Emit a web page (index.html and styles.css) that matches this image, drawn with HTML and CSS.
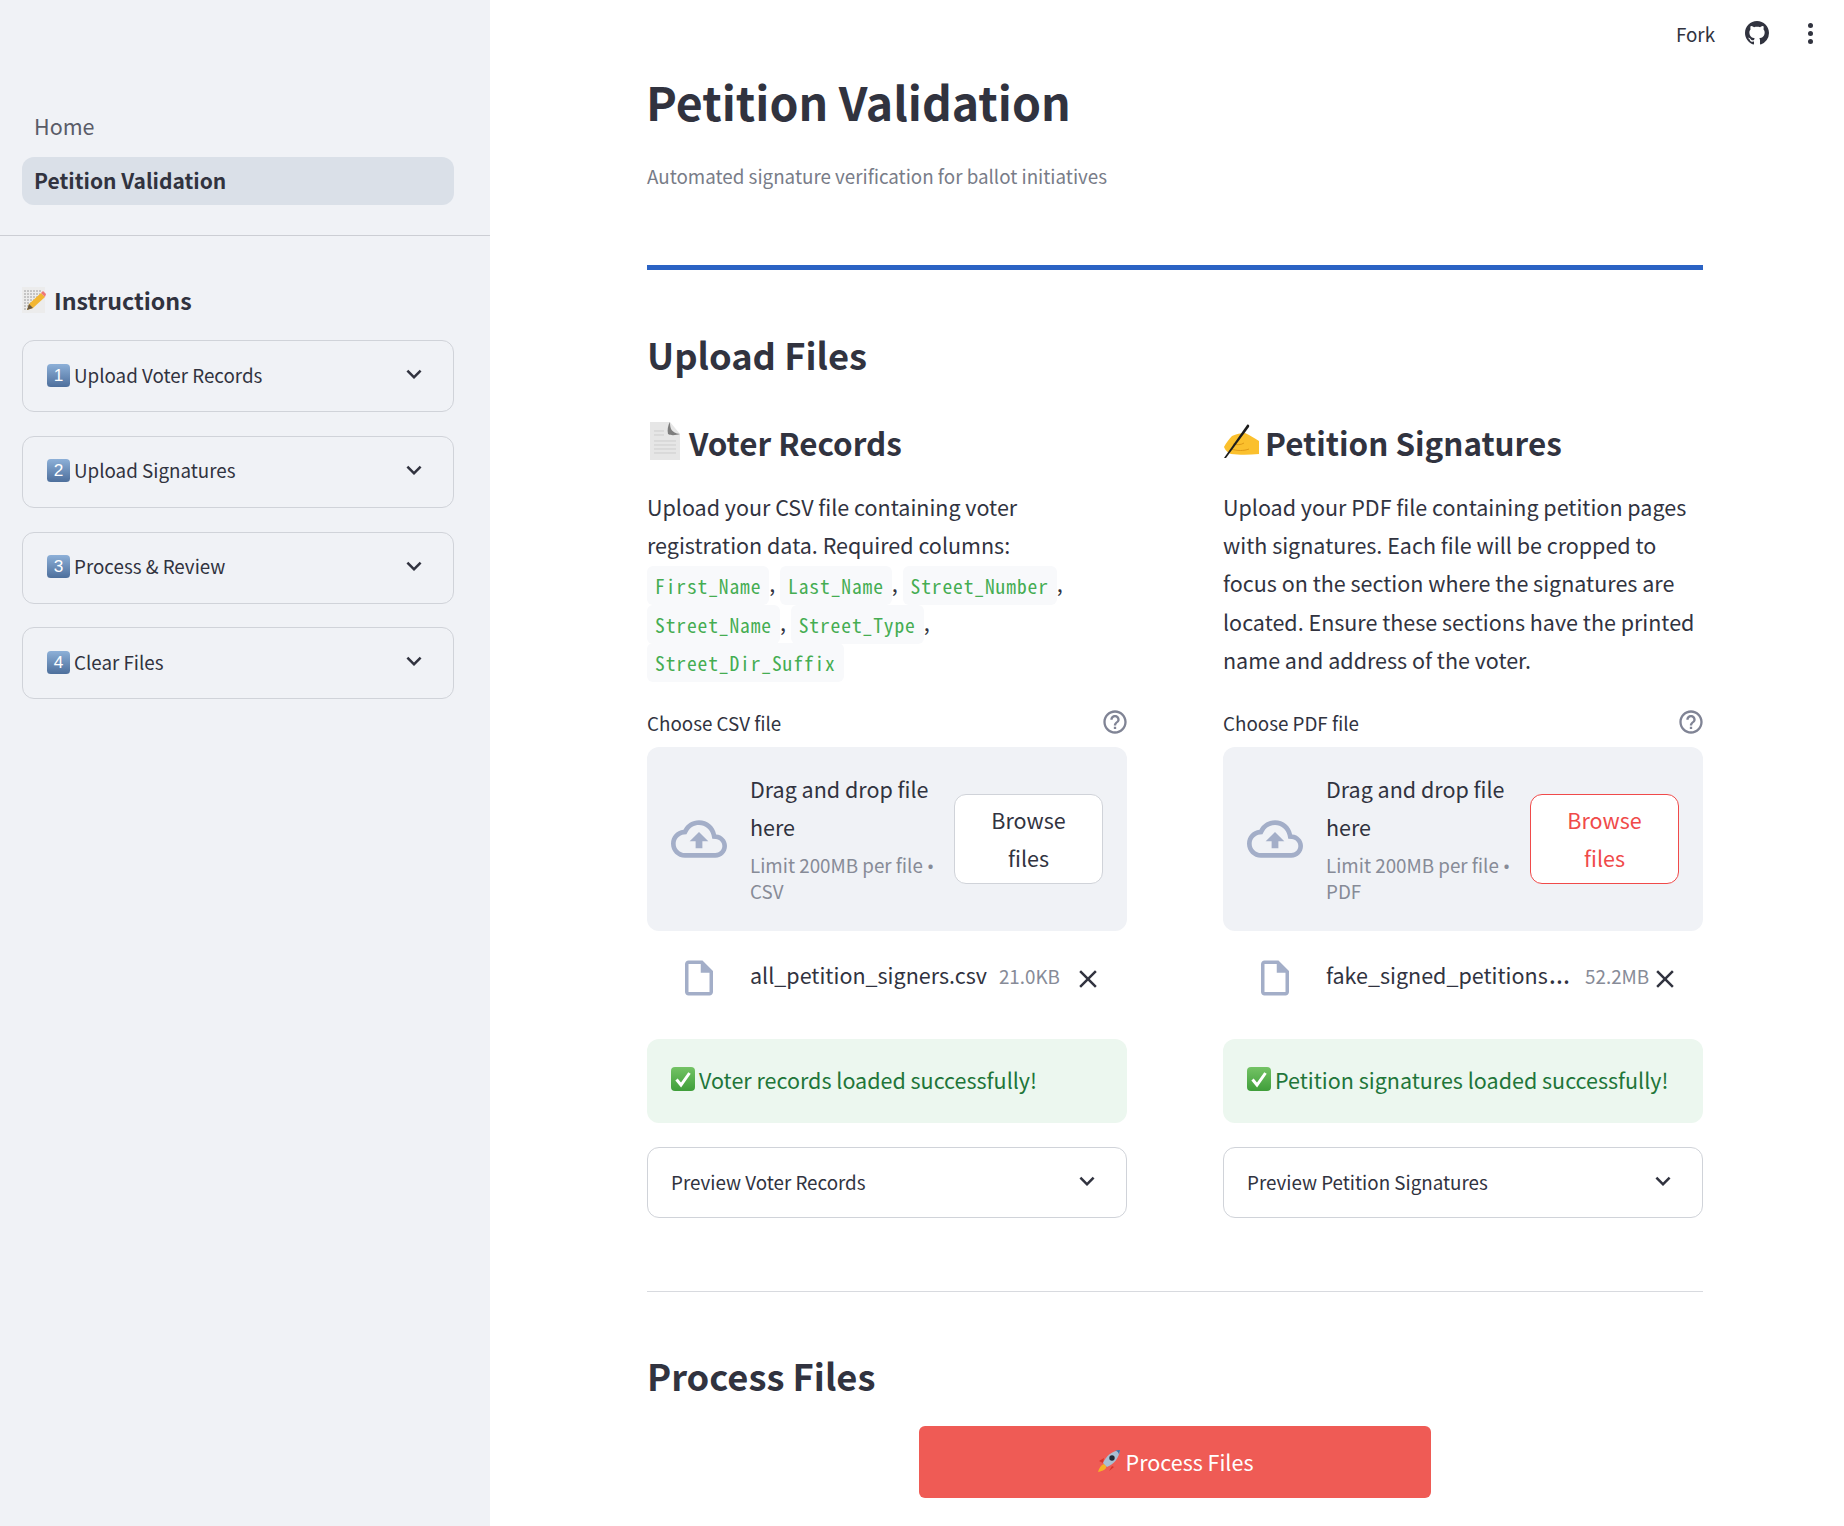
FILE: index.html
```html
<!DOCTYPE html>
<html lang="en">
<head>
<meta charset="utf-8">
<title>Petition Validation</title>
<link rel="stylesheet" href="styles.css">
</head>
<body>
<svg class="defs" aria-hidden="true"><defs><linearGradient id="keyg" x1="0" y1="0" x2="0" y2="1"><stop offset="0" stop-color="#8db0d8"/><stop offset="1" stop-color="#4d6f9c"/></linearGradient><linearGradient id="chkg" x1="0" y1="0" x2="0" y2="1"><stop offset="0" stop-color="#74c365"/><stop offset="1" stop-color="#3f9e3a"/></linearGradient></defs></svg>
<div class="app">
  <aside class="sidebar">
    <nav class="nav">
      <a class="nav-link">Home</a>
      <a class="nav-link active">Petition Validation</a>
    </nav>
    <div class="side-body">
      <h2 class="side-title"><svg class="emoji-memo" viewBox="0 0 24 26"><rect x="0" y="0" width="23" height="26" fill="#ececec"/><path d="M2 4h18M2 7h16M2 10h14M2 13h10M2 16h7M2 19h5M2 22h4" stroke="#8a8a8a" stroke-width=".8" stroke-dasharray="2 1"/><path d="M5 23l2-6L19 6l4 4-12 11z" fill="#f2b632"/><path d="M19 6l2-2 3 3-1 3z" fill="#e77"/><path d="M5 23l2-6 4 4z" fill="#6b5a44"/></svg>Instructions</h2>
      <div class="exp side-exp"><span class="exp-label"><svg class="key" viewBox="0 0 24 24"><rect width="24" height="24" rx="4" fill="url(#keyg)"/><text x="12" y="18" class="key-t">1</text></svg>Upload Voter Records</span><svg class="chev" viewBox="0 0 24 24"><path d="M7.41 8.59 12 13.17l4.59-4.58L18 10l-6 6-6-6z"/></svg></div>
      <div class="exp side-exp"><span class="exp-label"><svg class="key" viewBox="0 0 24 24"><rect width="24" height="24" rx="4" fill="url(#keyg)"/><text x="12" y="18" class="key-t">2</text></svg>Upload Signatures</span><svg class="chev" viewBox="0 0 24 24"><path d="M7.41 8.59 12 13.17l4.59-4.58L18 10l-6 6-6-6z"/></svg></div>
      <div class="exp side-exp"><span class="exp-label"><svg class="key" viewBox="0 0 24 24"><rect width="24" height="24" rx="4" fill="url(#keyg)"/><text x="12" y="18" class="key-t">3</text></svg>Process &amp; Review</span><svg class="chev" viewBox="0 0 24 24"><path d="M7.41 8.59 12 13.17l4.59-4.58L18 10l-6 6-6-6z"/></svg></div>
      <div class="exp side-exp"><span class="exp-label"><svg class="key" viewBox="0 0 24 24"><rect width="24" height="24" rx="4" fill="url(#keyg)"/><text x="12" y="18" class="key-t">4</text></svg>Clear Files</span><svg class="chev" viewBox="0 0 24 24"><path d="M7.41 8.59 12 13.17l4.59-4.58L18 10l-6 6-6-6z"/></svg></div>
    </div>
  </aside>
  <main class="main">
    <header class="toolbar">
      <span class="fork">Fork</span>
      <svg class="gh" viewBox="0 0 16 16"><path d="M8 0C3.58 0 0 3.58 0 8c0 3.54 2.29 6.53 5.47 7.59.4.07.55-.17.55-.38 0-.19-.01-.82-.01-1.49-2.01.37-2.53-.49-2.69-.94-.09-.23-.48-.94-.82-1.13-.28-.15-.68-.52-.01-.53.63-.01 1.08.58 1.23.82.72 1.21 1.87.87 2.33.66.07-.52.28-.87.51-1.07-1.78-.2-3.64-.89-3.64-3.95 0-.87.31-1.59.82-2.15-.08-.2-.36-1.02.08-2.12 0 0 .67-.21 2.2.82.64-.18 1.32-.27 2-.27s1.36.09 2 .27c1.53-1.04 2.2-.82 2.2-.82.44 1.1.16 1.92.08 2.12.51.56.82 1.27.82 2.15 0 3.07-1.87 3.75-3.65 3.95.29.25.54.73.54 1.48 0 1.07-.01 1.93-.01 2.2 0 .21.15.46.55.38A8.01 8.01 0 0 0 16 8c0-4.42-3.58-8-8-8z"/></svg>
      <span class="dots"><i></i><i></i><i></i></span>
    </header>
    <div class="content">
      <h1 class="title">Petition Validation</h1>
      <p class="subtitle">Automated signature verification for ballot initiatives</p>
      <div class="blue-rule"></div>
      <h2 class="section">Upload Files</h2>
      <div class="cols">
        <section class="col">
          <h3 class="col-title"><svg class="emoji-page" viewBox="0 0 36 40"><path d="M3 1h20l10 12v26H3z" fill="#e6e6e6"/><path d="M23 1c0 6 1 11 10 12-3 1-9 2-12 0-1-4 0-9 2-12z" fill="#7d7d7d"/><path d="M7 10h10M7 14h10M7 20h22M7 24h22M7 28h22M7 32h22" stroke="#cdcdcd" stroke-width="1"/></svg>Voter Records</h3>
          <p class="body-text">Upload your CSV file containing voter registration data. Required columns: <code>First_Name</code>, <code>Last_Name</code>, <code>Street_Number</code>, <code>Street_Name</code>, <code>Street_Type</code>, <code>Street_Dir_Suffix</code></p>
          <div class="label-row"><span>Choose CSV file</span><svg class="help" viewBox="0 0 24 24"><path d="M11 18h2v-2h-2zm1-16C6.48 2 2 6.48 2 12s4.480 10 10 10 10-4.480 10-10S17.520 2 12 2zm0 18c-4.410 0-8-3.590-8-8s3.590-8 8-8 8 3.590 8 8-3.590 8-8 8zm0-14c-2.210 0-4 1.790-4 4h2c0-1.100.9-2 2-2s2 .9 2 2c0 2-3 1.750-3 5h2c0-2.250 3-2.500 3-5 0-2.210-1.790-4-4-4z"/></svg></div>
          <div class="drop">
            <svg class="cloud" viewBox="0 0 24 24"><path d="M19.35 10.040C18.670 6.590 15.640 4 12 4 9.110 4 6.600 5.640 5.350 8.040 2.340 8.360 0 10.910 0 14c0 3.310 2.690 6 6 6h13c2.760 0 5-2.240 5-5 0-2.640-2.050-4.780-4.650-4.960zM19 18H6c-2.210 0-4-1.790-4-4 0-2.050 1.530-3.760 3.560-3.970l1.070-.11.5-.95C8.080 7.140 9.940 6 12 6c2.620 0 4.880 1.860 5.390 4.430l.3 1.500 1.530.11c1.560.1 2.780 1.410 2.780 2.960 0 1.650-1.350 3-3 3zM8 13h2.550v3h2.900v-3H16l-4-4z"/></svg>
            <div class="drop-text"><div class="drop-main">Drag and drop file here</div><div class="drop-sub">Limit 200MB per file <span class="latin">•</span> CSV</div></div>
            <button class="browse">Browse files</button>
          </div>
          <div class="file-row">
            <svg class="file-ic" viewBox="0 0 24 24"><path d="M14 2H6c-1.100 0-1.990.9-1.990 2L4 20c0 1.100.89 2 1.990 2H18c1.100 0 2-.9 2-2V8l-6-6zM6 20V4h7v5h5v11H6z"/></svg>
            <span class="file-name">all_petition_signers.csv</span><span class="file-size">21.0KB</span>
            <svg class="file-x" viewBox="0 0 24 24"><path d="M19 6.410 17.590 5 12 10.590 6.410 5 5 6.410 10.590 12 5 17.590 6.410 19 12 13.410 17.590 19 19 17.590 13.410 12z"/></svg>
          </div>
          <div class="success"><svg class="check" viewBox="0 0 24 24"><rect width="24" height="24" rx="4" fill="url(#chkg)"/><path d="M5.500 12.500l4.500 5.500 8.500-12" fill="none" stroke="#fff" stroke-width="3"/></svg>Voter records loaded successfully!</div>
          <div class="exp main-exp"><span class="exp-label">Preview Voter Records</span><svg class="chev" viewBox="0 0 24 24"><path d="M7.41 8.59 12 13.17l4.59-4.58L18 10l-6 6-6-6z"/></svg></div>
        </section>
        <section class="col">
          <h3 class="col-title"><svg class="emoji-write" viewBox="0 0 36 36"><path d="M9 13c4-2 9-3 13-3 5 2 9 5 14 8v13c-10 1-20 1-28 0-3-1-6-4-7-7 2-4 5-8 8-11z" fill="#fbc02d"/><path d="M8 26c6 2 13 2 18 0M10 21c4 1 8 1 11-1" stroke="#e09a16" stroke-width="1" fill="none"/><path d="M1 35L24 2c1-1 3 0 2 2L3 35z" fill="#1d1d1d"/></svg>Petition Signatures</h3>
          <p class="body-text">Upload your PDF file containing petition pages with signatures. Each file will be cropped to focus on the section where the signatures are located. Ensure these sections have the printed name and address of the voter.</p>
          <div class="label-row"><span>Choose PDF file</span><svg class="help" viewBox="0 0 24 24"><path d="M11 18h2v-2h-2zm1-16C6.48 2 2 6.48 2 12s4.480 10 10 10 10-4.480 10-10S17.520 2 12 2zm0 18c-4.410 0-8-3.590-8-8s3.590-8 8-8 8 3.590 8 8-3.590 8-8 8zm0-14c-2.210 0-4 1.790-4 4h2c0-1.100.9-2 2-2s2 .9 2 2c0 2-3 1.750-3 5h2c0-2.250 3-2.500 3-5 0-2.210-1.790-4-4-4z"/></svg></div>
          <div class="drop">
            <svg class="cloud" viewBox="0 0 24 24"><path d="M19.35 10.040C18.670 6.590 15.640 4 12 4 9.110 4 6.600 5.640 5.350 8.040 2.340 8.360 0 10.910 0 14c0 3.310 2.690 6 6 6h13c2.760 0 5-2.240 5-5 0-2.640-2.050-4.780-4.650-4.960zM19 18H6c-2.210 0-4-1.790-4-4 0-2.050 1.530-3.760 3.560-3.970l1.070-.11.5-.95C8.080 7.140 9.940 6 12 6c2.620 0 4.880 1.860 5.390 4.430l.3 1.500 1.530.11c1.560.1 2.780 1.410 2.780 2.960 0 1.650-1.350 3-3 3zM8 13h2.550v3h2.900v-3H16l-4-4z"/></svg>
            <div class="drop-text"><div class="drop-main">Drag and drop file here</div><div class="drop-sub">Limit 200MB per file <span class="latin">•</span> PDF</div></div>
            <button class="browse hot">Browse files</button>
          </div>
          <div class="file-row">
            <svg class="file-ic" viewBox="0 0 24 24"><path d="M14 2H6c-1.100 0-1.990.9-1.990 2L4 20c0 1.100.89 2 1.990 2H18c1.100 0 2-.9 2-2V8l-6-6zM6 20V4h7v5h5v11H6z"/></svg>
            <span class="file-name">fake_signed_petitions<span class="latin ell">…</span></span><span class="file-size">52.2MB</span>
            <svg class="file-x near" viewBox="0 0 24 24"><path d="M19 6.410 17.590 5 12 10.590 6.410 5 5 6.410 10.590 12 5 17.590 6.410 19 12 13.410 17.590 19 19 17.590 13.410 12z"/></svg>
          </div>
          <div class="success"><svg class="check" viewBox="0 0 24 24"><rect width="24" height="24" rx="4" fill="url(#chkg)"/><path d="M5.500 12.500l4.500 5.500 8.500-12" fill="none" stroke="#fff" stroke-width="3"/></svg>Petition signatures loaded successfully!</div>
          <div class="exp main-exp"><span class="exp-label">Preview Petition Signatures</span><svg class="chev" viewBox="0 0 24 24"><path d="M7.41 8.59 12 13.17l4.59-4.58L18 10l-6 6-6-6z"/></svg></div>
        </section>
      </div>
      <hr class="rule">
      <h2 class="section process">Process Files</h2>
      <div class="cta-wrap"><button class="cta"><svg class="rocket" viewBox="0 0 24 24"><path d="M7 15c-3 1-5 4-6 8 3-1 6-1 8-4 .5-1 .5-3-2-4z" fill="#f6b126"/><path d="M7 9L2 12l4 2zM15 17l-3 5 5-4z" fill="#d9342b"/><path d="M6 14C9 7 15 2 23 1c-1 8-6 14-13 17z" fill="#a9bfd2"/><path d="M18 1.800c2 .2 3.500 1.500 4 3.600.4-1.600.8-3 1-4.400-1.800.1-3.400.4-5 .8z" fill="#3a6ea5"/><circle cx="15" cy="9" r="2.700" fill="#1f2a36"/></svg>Process Files</button></div>
    </div>
  </main>
</div>
</body>
</html>
```
FILE: styles.css
```css
* { box-sizing: border-box; }
html, body { margin: 0; height: 100%; }
body { font-family: "Noto Sans CJK SC", "Noto Sans", sans-serif; color: #31333f; background: #fff; overflow: hidden; }
.defs { position: absolute; width: 0; height: 0; }
.latin { font-family: "Noto Sans", sans-serif; line-height: 1; }
.ell { font-size: 27px; margin-left: 1px; padding-right: 3px; }
.app { display: flex; height: 1526px; }
.sidebar { width: 490px; flex: none; background: #f0f2f6; }
.nav { padding: 103px 36px 0 22px; height: 236px; border-bottom: 1.500px solid #ccced4; display: flex; flex-direction: column; gap: 6px; }
.nav-link { display: flex; align-items: center; height: 48px; padding: 0 0 3px 12px; border-radius: 12px; font-size: 21.500px; color: #5a5c68; }
.nav-link.active { background: #dae0e8; color: #31333f; font-weight: 700; font-size: 21px; padding-bottom: 2px; }
.side-body { padding: 0 36px 0 22px; }
.side-title { margin: 0; padding-top: 24px; height: 104px; font-size: 23.200px; font-weight: 700; line-height: 48px; display: flex; align-items: center; gap: 8px; }
.emoji-memo { width: 24px; height: 26px; }
.exp { display: flex; align-items: center; justify-content: space-between; border: 1.500px solid #d0d3d9; border-radius: 12px; }
.side-exp { height: 72px; padding: 0 24px; margin-bottom: 23.800px; }
.main-exp { height: 71px; padding: 0 24px 0 23px; margin-top: 24px; }
.exp-label { font-size: 18.800px; display: flex; align-items: center; gap: 4px; padding-bottom: 4px; }
.main-exp .exp-label { padding-bottom: 2.500px; }
.key { width: 23px; height: 23px; margin-top: 2px; }
.key-t { font-family: "Liberation Sans", sans-serif; font-size: 18px; fill: #fff; text-anchor: middle; }
.chev { width: 30px; height: 30px; fill: #31333f; margin-top: -4px; flex: none; }
.main { flex: 1; position: relative; min-width: 0; }
.toolbar { position: absolute; top: 0; right: 0; height: 66px; display: flex; align-items: center; }
.fork { font-size: 18.800px; margin-right: 30px; }
.gh { width: 24px; height: 24px; fill: #31333f; margin-right: 39px; }
.dots { display: flex; flex-direction: column; gap: 3px; margin-right: 31px; }
.dots i { width: 5px; height: 5px; border-radius: 50%; background: #31333f; display: block; }
.content { margin-left: 157px; width: 1056px; }
.title { margin: 0 0 0 -1px; padding-top: 66px; font-size: 46.400px; font-weight: 700; line-height: 70px; }
.subtitle { margin: 24px 0 0; font-size: 18.800px; line-height: 32px; color: #787c88; }
.blue-rule { height: 5px; background: #2b63c4; margin-top: 73px; }
.section { margin: 0; font-size: 36.300px; font-weight: 700; line-height: 54px; padding-top: 56.500px; }
.section.process { padding-top: 56px; }
.cols { display: flex; gap: 96px; }
.col { width: 480px; flex: none; }
.col-title { margin: 0; padding-top: 37px; font-size: 31.400px; font-weight: 700; line-height: 50px; display: flex; align-items: center; gap: 6px; }
.emoji-page { width: 36px; height: 40px; margin-top: -4px; }
.emoji-write { width: 36px; height: 36px; margin-top: -4px; }
.body-text { margin: 20px 0 0; font-size: 21.500px; line-height: 38.400px; }
code { font-family: "Noto Sans Mono CJK SC", "DejaVu Sans Mono", monospace; font-size: 19.500px; letter-spacing: .880px; line-height: 1; vertical-align: -2px; color: #45ad52; background: #f8f9fb; border-radius: 6px; padding: 5px 8px; }
.label-row { display: flex; align-items: center; justify-content: space-between; height: 30px; font-size: 18.800px; margin-top: 27.500px; }
.help { width: 28px; height: 28px; fill: #808495; margin-right: -2px; flex: none; }
.drop { margin-top: 10px; height: 184px; background: #f0f2f6; border-radius: 12px; padding: 0 24px; display: flex; align-items: center; }
.cloud { width: 56px; height: 56px; fill: #a3aec8; flex: none; }
.drop-text { width: 200px; margin: 0 0 4px 23px; flex: none; }
.drop-main { font-size: 21.500px; line-height: 38.400px; margin-bottom: 6px; }
.drop-sub { font-size: 18.800px; line-height: 26px; color: #878b97; }
.browse { margin-left: auto; width: 149px; height: 90px; flex: none; background: #fff; border: 1.500px solid #d0d3d9; border-radius: 12px; font: inherit; font-size: 21.500px; line-height: 38px; color: #31333f; padding: 0 24px; }
.browse.hot { color: #f04a4a; border-color: #f04a4a; }
.file-row { display: flex; align-items: center; height: 92px; padding-left: 24px; }
.file-ic { width: 56px; height: 42px; fill: #a3aec8; flex: none; margin-top: 1px; }
.file-name { font-size: 21.500px; margin-left: 23px; padding-bottom: 5px; white-space: nowrap; }
.file-size { font-size: 18.800px; color: #878b97; margin-left: 12px; padding-bottom: 3px; }
.file-x { width: 30px; height: 30px; fill: #31333f; margin-left: 13px; margin-top: 3px; flex: none; }
.file-x.near { margin-left: 1px; }
.success { margin-top: 16px; height: 84px; background: #ecf7ef; border-radius: 12px; padding: 0 24px 3.500px; color: #217539; font-size: 21.500px; display: flex; align-items: center; gap: 4px; }
.check { width: 24px; height: 24px; flex: none; }
.rule { margin: 73px 0 0; border: 0; border-top: 1.500px solid #d8dadf; }
.cta-wrap { display: flex; justify-content: center; margin-top: 23.500px; }
.cta { width: 512px; height: 72px; border: 0; border-radius: 6px; background: #ef5b55; color: #fff; font: inherit; font-size: 21.500px; padding: 0 0 1px; display: flex; align-items: center; justify-content: center; gap: 5px; }
.rocket { width: 24px; height: 24px; }
```
